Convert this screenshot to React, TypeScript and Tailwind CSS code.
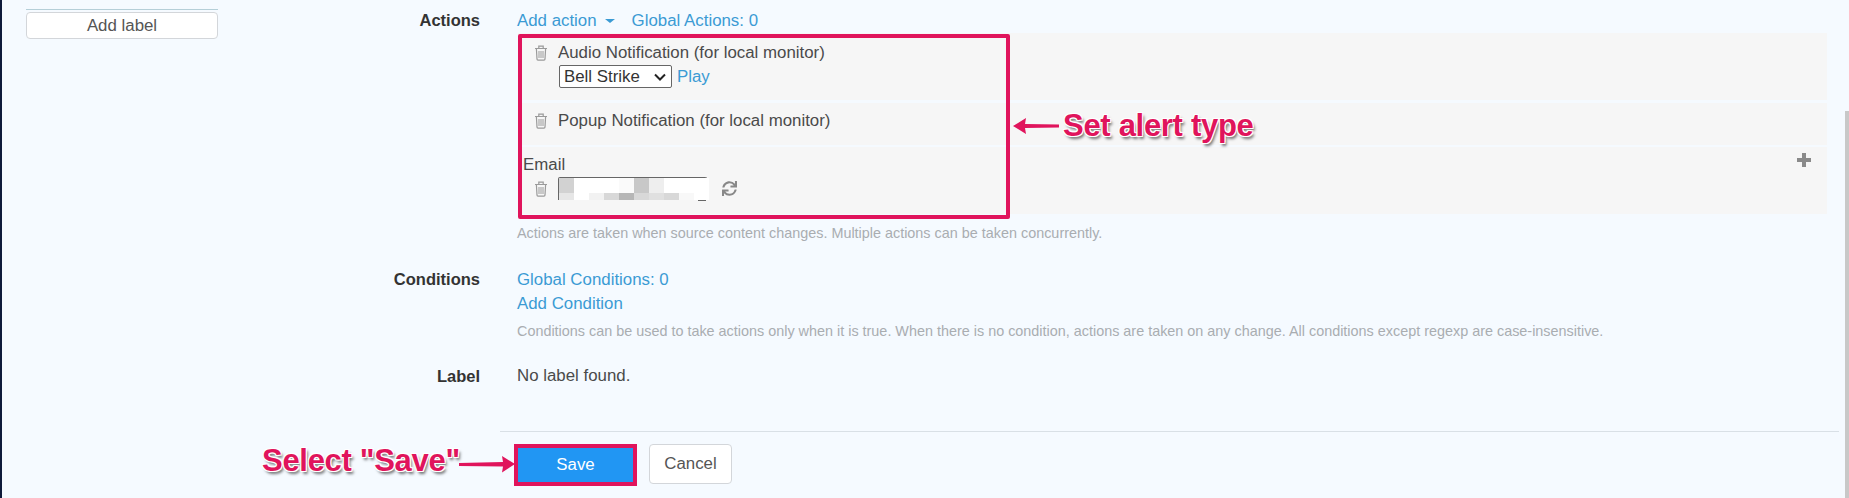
import React from "react";
import { FaSync } from "react-icons/fa";

const Trash = () => (
  <svg width="14" height="16" viewBox="0 0 14 16" fill="none" stroke="#9a9a9a" strokeWidth="1.2" className="shrink-0">
    <path d="M1 3.5h12M4.8 3.2V1.2h4.4v2M2.4 3.7l.6 10.4c0 .6.4 1 1 1h6c.6 0 1-.4 1-1l.6-10.4" />
    <path d="M5 6v7M7 6v7M9 6v7" strokeWidth="1" />
  </svg>
);

const mosaic = [
  ["#d2d2d2", "#fff", "#fff", "#fff", "#fafafa", "#c8c8c8", "#eeeeee", "#fff", "#fff", "#fff"],
  ["#e6e6e6", "#fff", "#f2f2f2", "#d8d8d8", "#b6b6b6", "#d8d8d8", "#e0e0e0", "#d8d8d8", "#f8f8f8", "#fff"],
];

const Row = ({ label, children }: { label: string; children: React.ReactNode }) => (
  <div className="flex">
    <div className="w-[255px] shrink-0 pr-[37px] text-right text-[16.5px] font-bold leading-[24px] text-[#333]">{label}</div>
    <div className="min-w-0 flex-1">{children}</div>
  </div>
);

const Link = ({ children }: { children: React.ReactNode }) => (
  <span className="text-[#3b9bd4]">{children}</span>
);

const shadow =
  "[text-shadow:-1px_-1px_0_#fff,1px_-1px_0_#fff,-1px_1px_0_#fff,1px_1px_0_#fff,2px_3px_3px_rgba(0,0,0,0.55)]";

export default function App() {
  return (
    <div className="relative flex h-[498px] w-[1849px] overflow-hidden bg-[#f5faff] font-['Liberation_Sans',Arial,sans-serif] text-[16.85px] text-[#4a4a4a]">
      <div className="w-[2px] shrink-0 bg-[#0e1a3a]" />

      {/* Sidebar */}
      <div className="w-[260px] shrink-0 pl-[24px] pr-[44px] pt-[9px]">
        <div className="h-px w-[192px] bg-[#b5cfd8]" />
        <button className="mt-[2px] h-[27px] w-[192px] rounded-[4px] border border-[#d3d6da] bg-white text-center text-[16.85px] leading-[24px] text-[#555]">
          Add label
        </button>
      </div>

      {/* Form */}
      <div className="flex min-w-0 flex-1 flex-col">
        <div className="pt-[8px]">
          <Row label="Actions">
            <div className="flex items-center pt-[1px] leading-[24px]">
              <Link>Add action</Link>
              <span className="ml-[8px] h-0 w-0 border-x-[5px] border-t-[4px] border-x-transparent border-t-[#3b9bd4]" />
              <span className="ml-[17px]">
                <Link>Global Actions: 0</Link>
              </span>
            </div>

            <div className="ml-[1px] w-[1309px]">
              <div className="h-[67px] bg-[#f6f6f6] pl-[16px] pt-[9px]">
                <div className="flex items-center leading-[22px]">
                  <Trash />
                  <span className="ml-[10px]">Audio Notification (for local monitor)</span>
                </div>
                <div className="ml-[25px] flex items-center">
                  <div className="flex h-[23px] w-[113px] items-center justify-between rounded-[2px] border border-[#666] bg-white pl-[4px] pr-[5px] text-[#333]">
                    <span>Bell Strike</span>
                    <svg width="12" height="8" viewBox="0 0 12 8" fill="none" stroke="#222" strokeWidth="2">
                      <path d="M1 1.5l5 5 5-5" />
                    </svg>
                  </div>
                  <span className="ml-[5px]">
                    <Link>Play</Link>
                  </span>
                </div>
              </div>

              <div className="mt-[3px] h-[42px] bg-[#f6f6f6] pl-[16px] pt-[7px]">
                <div className="flex items-center leading-[22px]">
                  <Trash />
                  <span className="ml-[10px]">Popup Notification (for local monitor)</span>
                </div>
              </div>

              <div className="relative mt-[2px] h-[67px] bg-[#f6f6f6] pl-[5px] pt-[8px]">
                <div className="leading-[20px]">Email</div>
                <div className="ml-[11px] mt-[2px] flex items-center">
                  <Trash />
                  <div className="relative ml-[10px] h-[23px] w-[149px] rounded-t-[2px] border-x border-t border-[#666] bg-white">
                    <div className="grid grid-cols-[repeat(10,15px)] grid-rows-[15px_7px]">
                      {mosaic.flat().map((c, i) => (
                        <div key={i} style={{ background: c }} />
                      ))}
                    </div>
                    <div className="absolute -bottom-px right-0 h-px w-[8px] bg-[#666]" />
                  </div>
                  <FaSync className="ml-[15px] text-[15px] text-[#888]" />
                </div>
                {/* add row */}
                <svg width="14" height="14" viewBox="0 0 14 14" className="absolute right-[16px] top-[6px]" fill="#8a8a8a">
                  <path d="M5 0h4v5h5v4H9v5H5V9H0V5h5z" />
                </svg>
              </div>
            </div>

            <div className="mt-[10px] text-[14.4px] leading-[18px] text-[#a9adb1]">
              Actions are taken when source content changes. Multiple actions can be taken concurrently.
            </div>
          </Row>
        </div>

        <div className="mt-[25px]">
          <Row label="Conditions">
            <div className="pt-[1px] leading-[24px]">
              <Link>Global Conditions: 0</Link>
            </div>
            <div className="leading-[23px]">
              <Link>Add Condition</Link>
            </div>
            <div className="mt-[7px] text-[14.4px] leading-[18px] text-[#a9adb1]">
              Conditions can be used to take actions only when it is true. When there is no condition, actions are taken on any change. All conditions except regexp are case-insensitive.
            </div>
          </Row>
        </div>

        <div className="mt-[24px]">
          <Row label="Label">
            <div className="leading-[24px]">No label found.</div>
          </Row>
        </div>

        <div className="ml-[238px] mt-[43px] h-px bg-[#d9e0e6]" />

        <div className="ml-[252px] mt-[12px] flex items-start">
          <button className="h-[42px] w-[123px] border-[4px] border-[#e0145c] bg-[#2196f3] text-[16.85px] text-white">
            Save
          </button>
          <button className="ml-[12px] h-[40px] w-[83px] rounded-[4px] border border-[#d3d6da] bg-white text-[16.85px] text-[#555]">
            Cancel
          </button>
        </div>
      </div>

      {/* Scrollbar */}
      <div className="ml-[6px] mt-[111px] w-[4px] shrink-0 bg-[#c8c8c8]" />

      {/* Annotations */}
      <div className="absolute left-[518px] top-[34px] h-[185px] w-[492px] rounded-[2px] border-[4px] border-[#e0145c]" />
      <svg width="46" height="18" viewBox="0 0 46 18" className="absolute left-[1013px] top-[117px]">
        <path d="M0 9L13 1l-1 6 34 .5v3L12 11l1 6z" fill="#e0145c" />
      </svg>
      <div className={`absolute left-[1063px] top-[108px] text-[31px] font-bold leading-[36px] tracking-[-0.3px] text-[#e0145c] ${shadow}`}>
        Set alert type
      </div>
      <div className={`absolute left-[262px] top-[443px] text-[31px] font-bold leading-[36px] tracking-[-0.3px] text-[#e0145c] ${shadow}`}>
        Select "Save"
      </div>
      <svg width="56" height="18" viewBox="0 0 56 18" className="absolute left-[459px] top-[455px]">
        <path d="M56 9L43 1l1 6L0 8v3l44 .5-1 6z" fill="#e0145c" />
      </svg>
    </div>
  );
}
